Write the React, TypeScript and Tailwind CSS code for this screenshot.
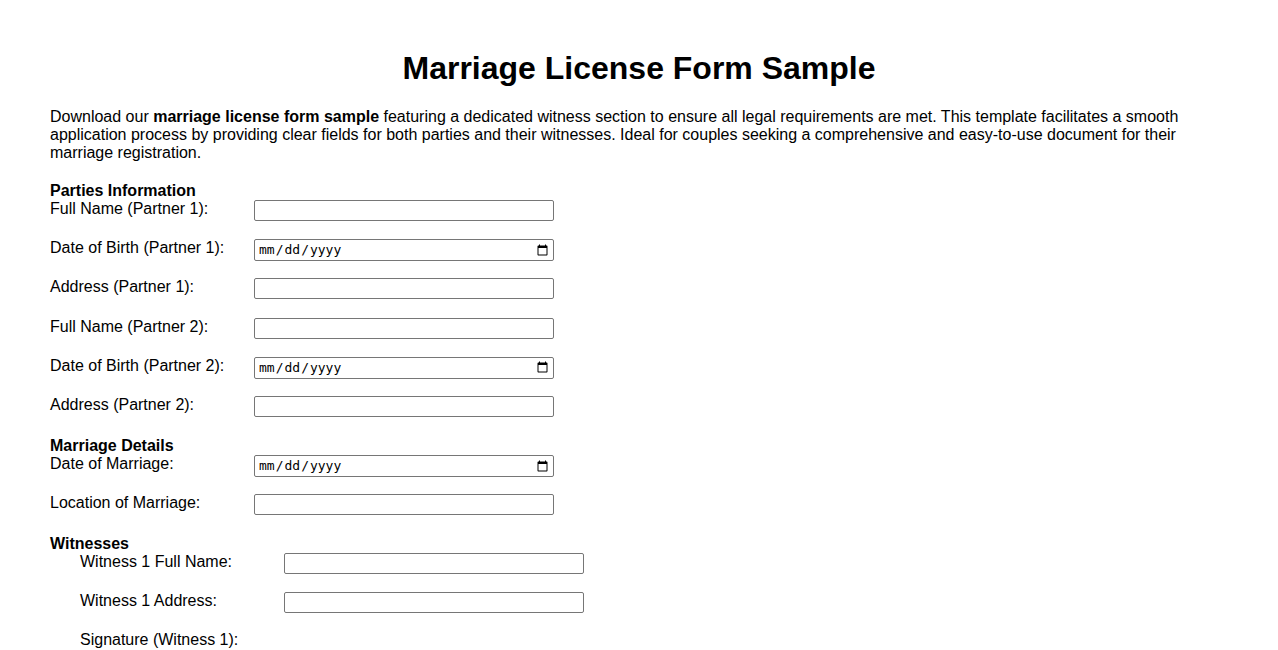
import React from "react";

type Field = { label: string; type: "text" | "date" };

const parties: Field[] = [
  { label: "Full Name (Partner 1):", type: "text" },
  { label: "Date of Birth (Partner 1):", type: "date" },
  { label: "Address (Partner 1):", type: "text" },
  { label: "Full Name (Partner 2):", type: "text" },
  { label: "Date of Birth (Partner 2):", type: "date" },
  { label: "Address (Partner 2):", type: "text" },
];

const marriage: Field[] = [
  { label: "Date of Marriage:", type: "date" },
  { label: "Location of Marriage:", type: "text" },
];

const witnesses: Field[] = [
  { label: "Witness 1 Full Name:", type: "text" },
  { label: "Witness 1 Address:", type: "text" },
];

function Row({ field }: { field: Field }) {
  return (
    <div className="flex items-start h-[39.2px]">
      <label className="w-[204px] shrink-0 leading-[18px]">{field.label}</label>
      {field.type === "date" ? (
        <input
          type="date"
          className="h-[22px] w-[300px] rounded-[2px] border border-[#767676] bg-white pl-[3px] pr-[2px] text-[13px] font-['DejaVu_Sans_Mono',monospace] text-black"
        />
      ) : (
        <input
          type="text"
          className="h-[21px] w-[300px] rounded-[2px] border border-[#767676] bg-white px-[2px] text-[13px]"
        />
      )}
    </div>
  );
}

function Section({
  title,
  fields,
  indent,
  className = "",
}: {
  title: string;
  fields: Field[];
  indent?: boolean;
  className?: string;
}) {
  return (
    <section className={className}>
      <h3 className="font-bold leading-[18px]">{title}</h3>
      <div className={indent ? "pl-[30px]" : ""}>
        {fields.map((f) => (
          <Row key={f.label} field={f} />
        ))}
        {indent && <div className="leading-[18px]">Signature (Witness 1):</div>}
      </div>
    </section>
  );
}

export default function App() {
  return (
    <main className="min-h-screen bg-white px-[50px] pt-[50px] text-[16px] text-black font-['Liberation_Sans',Arial,sans-serif]">
      <h1 className="text-center text-[32px] font-bold leading-[37px]">Marriage License Form Sample</h1>
      <p className="mt-[21px] leading-[18px]">
        Download our <strong>marriage license form sample</strong> featuring a dedicated witness section to ensure all
        legal requirements are met. This template facilitates a smooth application process by providing clear fields for
        both parties and their witnesses. Ideal for couples seeking a comprehensive and easy-to-use document for their
        marriage registration.
      </p>
      <form className="mt-[20px]">
        <Section title="Parties Information" fields={parties} />
        <Section title="Marriage Details" fields={marriage} className="mt-[2px]" />
        <Section title="Witnesses" fields={witnesses} indent className="mt-[1px]" />
      </form>
    </main>
  );
}
